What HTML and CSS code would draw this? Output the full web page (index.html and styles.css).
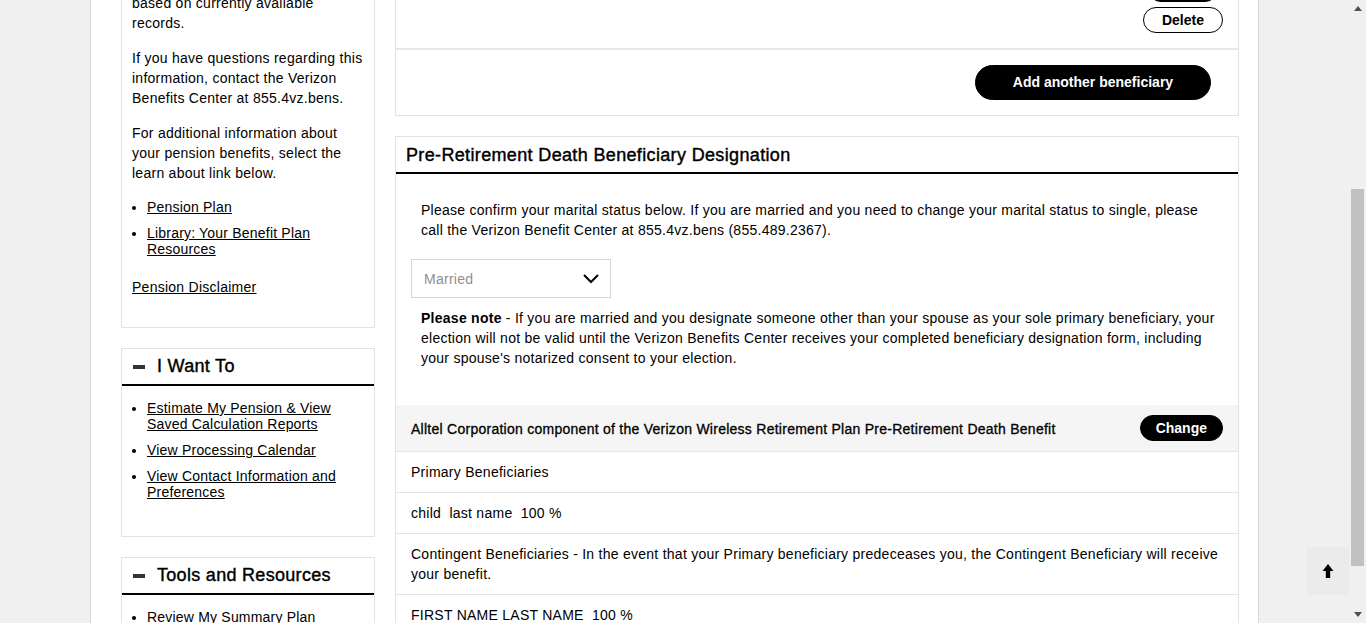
FILE: index.html
```html
<!DOCTYPE html>
<html lang="en">
<head>
<meta charset="utf-8">
<title>Pre-Retirement Death Beneficiary Designation</title>
<link rel="stylesheet" href="styles.css">
</head>
<body>
<div class="screen">
  <div class="viewport">
    <div class="page">
      <aside class="sidebar">
        <section class="side-box side-info">
          <p>based on currently available records.</p>
          <p>If you have questions regarding this information, contact the Verizon Benefits Center at 855.4vz.bens.</p>
          <p>For additional information about your pension benefits, select the learn about link below.</p>
          <ul class="links links-info">
            <li><a href="#">Pension Plan</a></li>
            <li><a href="#">Library: Your Benefit Plan Resources</a></li>
          </ul>
          <p class="disclaimer"><a href="#">Pension Disclaimer</a></p>
        </section>

        <section class="side-box">
          <h3 class="side-head"><span class="minus"></span>I Want To</h3>
          <ul class="links links-box">
            <li><a href="#">Estimate My Pension &amp; View Saved Calculation Reports</a></li>
            <li><a href="#">View Processing Calendar</a></li>
            <li><a href="#">View Contact Information and Preferences</a></li>
          </ul>
        </section>

        <section class="side-box">
          <h3 class="side-head"><span class="minus"></span>Tools and Resources</h3>
          <ul class="links links-box">
            <li><a href="#">Review My Summary Plan Description</a></li>
          </ul>
        </section>
      </aside>

      <main class="main">
        <section class="card">
          <div class="card-actions">
            <div class="action-stack">
              <button class="pill pill-dark pill-edit">Edit</button>
              <button class="pill pill-outline">Delete</button>
            </div>
          </div>
          <div class="card-footer">
            <button class="pill pill-dark pill-lg">Add another beneficiary</button>
          </div>
        </section>

        <section class="card">
          <h2 class="card-title">Pre-Retirement Death Beneficiary Designation</h2>
          <div class="card-body">
            <p class="copy intro">Please confirm your marital status below. If you are married and you need to change your marital status to single, please call the Verizon Benefit Center at 855.4vz.bens (855.489.2367).</p>
            <div class="select">
              <span>Married</span>
              <svg class="chevron" width="16" height="10" viewBox="0 0 16 10"><polyline points="1,1 8,8 15,1" fill="none" stroke="#000" stroke-width="2"/></svg>
            </div>
            <p class="copy note"><strong>Please note</strong> - If you are married and you designate someone other than your spouse as your sole primary beneficiary, your election will not be valid until the Verizon Benefits Center receives your completed beneficiary designation form, including your spouse's notarized consent to your election.</p>
          </div>
          <div class="plan-row">
            <span class="plan-name">Alltel Corporation component of the Verizon Wireless Retirement Plan Pre-Retirement Death Benefit</span>
            <button class="pill pill-dark">Change</button>
          </div>
          <div class="row">Primary Beneficiaries</div>
          <div class="row">child&nbsp; last name&nbsp; 100 %</div>
          <div class="row">Contingent Beneficiaries - In the event that your Primary beneficiary predeceases you, the Contingent Beneficiary will receive your benefit.</div>
          <div class="row">FIRST NAME LAST NAME&nbsp; 100 %</div>
        </section>
      </main>
    </div>

    <button class="to-top" aria-label="Back to top">
      <svg width="12" height="14" viewBox="0 0 12 14"><path d="M6 0 L11.5 7 H8.2 V14 H3.8 V7 H0.5 Z" fill="#000"/></svg>
    </button>
  </div>

  <div class="scrollbar">
    <div class="sb-arrow"><svg width="8" height="5" viewBox="0 0 8 5"><path d="M4 0 L8 5 H0 Z" fill="#505050"/></svg></div>
    <div class="sb-track"><div class="sb-thumb"></div></div>
    <div class="sb-arrow"><svg width="8" height="5" viewBox="0 0 8 5"><path d="M0 0 H8 L4 5 Z" fill="#505050"/></svg></div>
  </div>
</div>
</body>
</html>
```

FILE: styles.css
```css
* { box-sizing: border-box; }

html, body {
  margin: 0;
  height: 623px;
  overflow: hidden;
}

body {
  background: #f0f0f0;
  font-family: "Liberation Sans", Arial, Helvetica, sans-serif;
  font-size: 14px;
  letter-spacing: 0.26px;
  color: #000;
}

.screen {
  display: flex;
  height: 623px;
}

.viewport {
  flex: 1;
  position: relative;
  overflow: hidden;
  height: 623px;
}

.page {
  width: 1169px;
  margin: 0 auto;
  min-height: 623px;
  background: #fff;
  border-left: 1px solid #d9d9d9;
  border-right: 1px solid #d9d9d9;
  padding: 0 19px 0 30px;
  display: flex;
  align-items: flex-start;
  gap: 20px;
}

/* ---------- sidebar ---------- */
.sidebar {
  width: 254px;
  flex: none;
  margin-top: -18px;
  display: flex;
  flex-direction: column;
  gap: 20px;
}

.side-box {
  border: 1px solid #e3e3e3;
  background: #fff;
}

.side-info {
  padding: 10px 10px 15px;
}

.side-info p {
  margin: 0 0 15px;
  line-height: 20px;
}

.side-info .disclaimer {
  margin-top: 20px;
}

.side-info p:last-child {
  margin-bottom: 15px;
}

a {
  color: #000;
  text-decoration: underline;
}

.links {
  padding: 0 0 0 15px;
  line-height: 16px;
  letter-spacing: 0.2px;
}

.links li + li {
  margin-top: 10px;
}

.links-info {
  margin: 16px 0 0;
}

.links-box {
  margin: 14px 10px 36px;
}

.side-head {
  margin: 0;
  height: 37px;
  display: flex;
  align-items: center;
  gap: 12px;
  padding: 0 11px;
  border-bottom: 2px solid #000;
  font-size: 18px;
  font-weight: normal;
  letter-spacing: 0.3px;
  -webkit-text-stroke: 0.4px #000;
}

.minus {
  width: 12px;
  height: 4px;
  background: #333;
  flex: none;
}

/* ---------- main ---------- */
.main {
  width: 844px;
  flex: none;
  margin-top: -40px;
  display: flex;
  flex-direction: column;
  gap: 20px;
}

.card {
  border: 1px solid #e3e3e3;
  background: #fff;
}

.card-actions {
  display: flex;
  justify-content: flex-end;
  padding: 15px 15px 15px;
  border-bottom: 2px solid #e8e8e8;
}

.action-stack {
  display: flex;
  flex-direction: column;
  align-items: center;
  gap: 5px;
}

.card-footer {
  display: flex;
  justify-content: flex-end;
  padding: 15px 27px 15px;
}

.pill {
  font-family: "Liberation Sans", Arial, sans-serif;
  font-weight: bold;
  font-size: 14px;
  letter-spacing: 0;
  height: 26px;
  line-height: 24px;
  padding: 0 14px;
  border-radius: 13px;
  border: 1px solid #000;
  cursor: pointer;
}

.pill-dark {
  background: #000;
  color: #fff;
}

.pill-edit {
  width: 70px;
}

.pill-outline {
  background: #fff;
  color: #000;
  padding: 0 18px;
}

.pill-lg {
  height: 35px;
  line-height: 33px;
  border-radius: 18px;
  width: 236px;
  padding: 0;
}

.card-title {
  margin: 0;
  height: 37px;
  line-height: 36px;
  padding: 0 10px;
  border-bottom: 2px solid #000;
  font-size: 18px;
  font-weight: normal;
  letter-spacing: 0.35px;
  -webkit-text-stroke: 0.4px #000;
}

.card-body {
  padding: 26px 15px 37px;
}

.copy {
  margin: 0;
  padding: 0 10px;
  line-height: 20px;
}

.intro {
  margin-bottom: 19px;
}

.note {
  margin-top: 10px;
  padding-right: 0;
}

.select {
  width: 200px;
  height: 39px;
  border: 1px solid #d6d6d6;
  display: flex;
  align-items: center;
  justify-content: space-between;
  padding: 0 11px 0 12px;
  color: #8f8f8f;
  font-size: 14px;
}

.plan-row {
  height: 47px;
  background: #f5f5f5;
  border-bottom: 1px solid #e5e5e5;
  display: flex;
  align-items: center;
  justify-content: space-between;
  padding: 1px 15px 0;
}

.plan-name {
  -webkit-text-stroke: 0.3px #000;
}

.plan-row .pill {
  padding: 0 15px;
  margin-top: -1px;
}

.row {
  padding: 10px 15px;
  line-height: 20px;
  border-bottom: 1px solid #e5e5e5;
}

/* ---------- back to top ---------- */
.to-top {
  position: absolute;
  right: 0;
  bottom: 28px;
  width: 42px;
  height: 48px;
  border: 0;
  padding: 0;
  background: #ebebeb;
  display: flex;
  align-items: center;
  justify-content: center;
}

/* ---------- scrollbar ---------- */
.scrollbar {
  width: 17px;
  flex: none;
  background: #f0f0f0;
  display: flex;
  flex-direction: column;
}

.sb-arrow {
  height: 17px;
  display: flex;
  align-items: center;
  justify-content: center;
}

.sb-track {
  flex: 1;
  padding: 172px 2px 0;
}

.sb-thumb {
  height: 377px;
  background: #c1c1c1;
}
```
